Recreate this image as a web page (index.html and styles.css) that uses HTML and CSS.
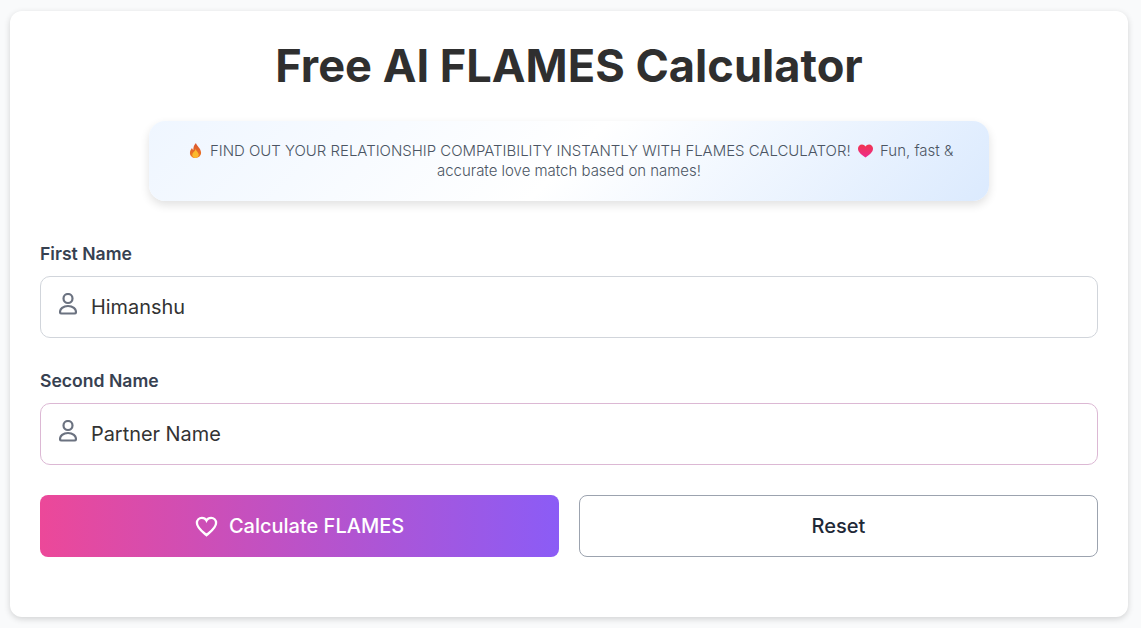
FILE: index.html
```html
<!DOCTYPE html>
<html lang="en">
<head>
    <meta charset="UTF-8">
    <meta name="viewport" content="width=device-width, initial-scale=1.0">
    <title>Free AI FLAMES Calculator</title>
    <link rel="stylesheet" href="styles.css">
</head>
<body>
    <div class="card">
        <h1 class="title">Free AI FLAMES Calculator</h1>

        <p class="banner">
            <svg class="emoji" viewBox="0 0 14 16" aria-hidden="true">
                <defs>
                    <linearGradient id="flame-outer" x1="0" y1="0" x2="0" y2="1">
                        <stop offset="0" stop-color="#d9562f"/>
                        <stop offset="1" stop-color="#f07a22"/>
                    </linearGradient>
                </defs>
                <path fill="url(#flame-outer)" d="M7.500 0C8 3 12.800 5.500 13 10.200 13.100 13.600 10.400 16 7 16S.9 13.700 1 10.300C1.100 8 2.300 6.600 3.200 5.300 3.500 6.500 4 7.200 4.700 7.500 4.500 4.500 5.600 1.800 7.500 0Z"/>
                <path fill="#fbb92d" d="M7.200 6.500C7.600 8.800 10.500 10.300 10.500 12.700 10.500 14.600 8.900 16 7 16S3.500 14.600 3.500 12.800C3.500 10.300 6.400 9.200 7.200 6.500Z"/>
            </svg>
            FIND OUT YOUR RELATIONSHIP COMPATIBILITY INSTANTLY WITH FLAMES CALCULATOR!
            <svg class="emoji emoji-heart" viewBox="0 0 16 14" aria-hidden="true">
                <defs>
                    <linearGradient id="heart-fill" x1="0" y1="0" x2="0" y2="1">
                        <stop offset="0" stop-color="#f0364f"/>
                        <stop offset="1" stop-color="#ee2a8c"/>
                    </linearGradient>
                </defs>
                <path fill="url(#heart-fill)" d="M8 14C4 11 0 8.500 0 4.300 0 1.800 1.900 0 4.200 0 5.800 0 7.200.8 8 2.200 8.800.8 10.200 0 11.800 0 14.100 0 16 1.800 16 4.300 16 8.500 12 11 8 14Z"/>
            </svg>
            Fun, fast &amp;<br>accurate love match based on names!
        </p>

        <form class="form">
            <div class="field">
                <label class="field-label" for="first-name">First Name</label>
                <div class="input-box">
                    <svg class="input-icon" viewBox="0 0 18 22" aria-hidden="true">
                        <circle cx="9" cy="5.500" r="4.500"/>
                        <path d="M2.500 20.500C1.500 20.500 1 20 1 19c0-3 3-6 8-6s8 3 8 6c0 1-.5 1.500-1.500 1.500z"/>
                    </svg>
                    <input class="input" id="first-name" type="text" value="Himanshu">
                </div>
            </div>

            <div class="field field-last">
                <label class="field-label" for="second-name">Second Name</label>
                <div class="input-box input-box-active">
                    <svg class="input-icon" viewBox="0 0 18 22" aria-hidden="true">
                        <circle cx="9" cy="5.500" r="4.500"/>
                        <path d="M2.500 20.500C1.500 20.500 1 20 1 19c0-3 3-6 8-6s8 3 8 6c0 1-.5 1.500-1.500 1.500z"/>
                    </svg>
                    <input class="input" id="second-name" type="text" placeholder="Partner Name">
                </div>
            </div>

            <div class="actions">
                <button class="btn btn-primary" type="button">
                    <svg class="btn-icon" viewBox="0 0 24 24" aria-hidden="true">
                        <path d="M12 21C8 17.500 2 13.500 2 8.300 2 5.200 4.400 3 7.200 3 9.200 3 11 4 12 5.800 13 4 14.800 3 16.800 3 19.600 3 22 5.200 22 8.300 22 13.500 16 17.500 12 21Z"/>
                    </svg>
                    Calculate FLAMES
                </button>
                <button class="btn btn-secondary" type="reset">Reset</button>
            </div>
        </form>
    </div>
</body>
</html>
```

FILE: styles.css
```css
* {
    margin: 0;
    padding: 0;
    box-sizing: border-box;
    font-family: Inter, "Liberation Sans", sans-serif;
}

body {
    background: #f9fafb;
    padding: 11px 13px 11px 10px;
}

.card {
    background: #fff;
    border-radius: 12px;
    height: 606px;
    padding: 30px 30px;
    box-shadow: 0 2px 6px rgba(0, 0, 0, 0.16);
}

.title {
    font-size: 45.200px;
    font-weight: 700;
    line-height: 50px;
    color: #2f2f2f;
    text-align: center;
}

.banner {
    width: 840px;
    height: 80px;
    margin: 30px auto 0;
    padding: 20px 30px;
    border-radius: 16px;
    background: linear-gradient(135deg, #eff6ff, #fff 50%, #dbeafe);
    box-shadow: 0 4px 10px rgba(0, 0, 0, 0.12);
    font-size: 14.960px;
    font-weight: 300;
    line-height: 20px;
    color: #4b5563;
    text-align: center;
}

.emoji {
    width: 13px;
    height: 15px;
    margin: 0 4px;
    vertical-align: -2px;
}

.emoji-heart {
    width: 15px;
    height: 14px;
    margin: 0 3px;
    vertical-align: -2px;
}

.form {
    margin-top: 41px;
}

.field {
    margin-bottom: 31px;
}

.field-last {
    margin-bottom: 30px;
}

.field-label {
    display: block;
    margin-bottom: 11px;
    font-size: 17.600px;
    font-weight: 600;
    line-height: 23px;
    color: #374151;
}

.input-box {
    display: flex;
    align-items: center;
    gap: 14px;
    height: 62px;
    padding: 0 18px;
    border: 1px solid #d1d5db;
    border-radius: 10px;
    background: #fff;
}

.input-box-active {
    border-color: #dcb8d4;
}

.input-icon {
    width: 18px;
    height: 22px;
    margin-top: -6px;
    fill: none;
    stroke: #6b7280;
    stroke-width: 2.200;
    flex-shrink: 0;
}

.input {
    flex: 1;
    min-width: 0;
    border: none;
    outline: none;
    background: transparent;
    font-size: 19.900px;
    color: #333;
}

.input::placeholder {
    color: #333;
    opacity: 1;
}

.actions {
    display: grid;
    grid-template-columns: 1fr 1fr;
    gap: 20px;
}

.btn {
    display: flex;
    align-items: center;
    justify-content: center;
    gap: 11px;
    height: 62px;
    border-radius: 8px;
    font-size: 20px;
    font-weight: 500;
    cursor: pointer;
}

.btn-primary {
    border: none;
    background: linear-gradient(90deg, #ec4899, #8b5cf6);
    color: #fff;
}

.btn-secondary {
    border: 1px solid #9ca3af;
    background: #fff;
    color: #1f2937;
}

.btn-icon {
    width: 23px;
    height: 23px;
    fill: none;
    stroke: #fff;
    stroke-width: 2.400;
}
```
